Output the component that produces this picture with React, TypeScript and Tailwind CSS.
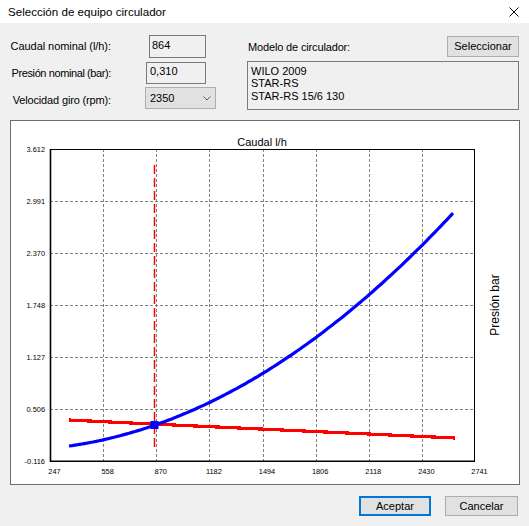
import React from "react";

const font = { fontFamily: '"Liberation Sans", Arial, sans-serif' };

// grid positions in page coordinates (svg viewBox uses the same numbers)
const PLOT = { left: 50, top: 149, right: 475, bottom: 461 };
const xTicks = ["247", "558", "870", "1182", "1494", "1806", "2118", "2430", "2741"];
const yTicks = ["3.612", "2.991", "2.370", "1.748", "1.127", "0.506", "-0.116"];

function curvePoints() {
  const pts: string[] = [];
  for (let x = 69; x <= 455; x += 3) {
    const u = x - 69;
    const y = 446 - 0.139 * u - 0.001217 * u * u;
    pts.push(`${x},${y.toFixed(1)}`);
  }
  return pts.join(" ");
}

function Chart() {
  const stepX = (PLOT.right - PLOT.left) / 8;
  const stepY = (PLOT.bottom - PLOT.top) / 6;
  return (
    <svg width={508} height={363} viewBox="11 121 508 363" className="block">
      {/* grid */}
      {Array.from({ length: 7 }).map((_, i) => {
        const x = Math.round(PLOT.left + stepX * (i + 1)) + 0.5;
        return (
          <line
            key={`vx-${i}`}
            x1={x}
            x2={x}
            y1={PLOT.top}
            y2={PLOT.bottom}
            stroke="#808080"
            strokeWidth={1}
            strokeDasharray="3 2"
          />
        );
      })}
      {Array.from({ length: 5 }).map((_, i) => {
        const y = Math.round(PLOT.top + stepY * (i + 1)) + 0.5;
        return (
          <line
            key={`hy-${i}`}
            x1={PLOT.left}
            x2={PLOT.right}
            y1={y}
            y2={y}
            stroke="#808080"
            strokeWidth={1}
            strokeDasharray="3 2"
          />
        );
      })}

      {/* frame */}
      <rect
        x={PLOT.left + 0.5}
        y={PLOT.top + 0.5}
        width={PLOT.right - PLOT.left - 1}
        height={PLOT.bottom - PLOT.top}
        fill="none"
        stroke="#000"
        strokeWidth={1}
      />
      <line x1={50.5} x2={50.5} y1={149} y2={462} stroke="#000" strokeWidth={1.6} />
      <line x1={50} x2={475} y1={461.2} y2={461.2} stroke="#000" strokeWidth={1.4} />

      {/* y labels */}
      {yTicks.map((t, i) => (
        <text
          key={t}
          x={45}
          y={PLOT.top + stepY * i + 2.6}
          fontSize={7.4}
          textAnchor="end"
          fill="#000"
          style={font}
        >
          {t}
        </text>
      ))}
      {/* x labels */}
      {xTicks.map((t, i) => (
        <text
          key={t}
          x={PLOT.left + stepX * i + 4.5}
          y={474}
          fontSize={7.4}
          textAnchor="middle"
          fill="#000"
          style={font}
        >
          {t}
        </text>
      ))}

      <text x={262} y={146} fontSize={11} textAnchor="middle" fill="#000" style={font}>
        Caudal l/h
      </text>
      <text
        x={499}
        y={305}
        fontSize={12}
        textAnchor="middle"
        fill="#000"
        transform="rotate(-90 499 305)"
        style={font}
      >
        Presión bar
      </text>

      {/* nominal flow marker */}
      <line
        x1={154.5}
        x2={154.5}
        y1={165}
        y2={447}
        stroke="#ff0000"
        strokeWidth={1.5}
        strokeDasharray="9 4"
      />

      {/* network curve */}
      <polyline
        points="69,420 120,422.5 200,426.2 280,429.9 360,433.6 420,436.4 455,438"
        fill="none"
        stroke="#ff0000"
        strokeWidth={3.2}
        shapeRendering="crispEdges"
      />
      {/* pump curve */}
      <polyline
        points={curvePoints()}
        fill="none"
        stroke="#0000ff"
        strokeWidth={3.2}
      />
      <rect x={150.5} y={421} width={8} height={8} fill="#0000ff" />
    </svg>
  );
}

export default function App() {
  return (
    <div className="w-[529px] h-[526px] bg-[#f0f0f0] text-black overflow-hidden" style={font}>
      {/* title bar */}
      <div className="h-[23px] bg-white flex items-center justify-between pl-[8px] pr-[10px]">
        <span className="text-[11.6px]">Selección de equipo circulador</span>
        <svg width="10" height="10" viewBox="0 0 10 10">
          <path d="M0.5 0.5 L9.5 9.5 M9.5 0.5 L0.5 9.5" stroke="#000" strokeWidth="1" />
        </svg>
      </div>

      {/* form */}
      <div className="h-[97px] flex text-[11px]">
        <div className="w-[247px] flex flex-col pt-[12px]">
          <div className="flex items-center h-[23px]">
            <span className="w-[111px] text-right tracking-[-0.05px]">Caudal nominal (l/h):</span>
            <div className="ml-[38px] w-[57px] h-[23px] border border-[#7a7a7a] pl-[2px] pt-[2px] leading-[14px]">
              864
            </div>
          </div>
          <div className="flex items-center h-[22px] mt-[4px]">
            <span className="w-[111px] text-right tracking-[-0.4px]">Presión nominal (bar):</span>
            <div className="ml-[35px] w-[60px] h-[22px] border border-[#7a7a7a] pl-[3px] pt-[1px] leading-[14px]">
              0,310
            </div>
          </div>
          <div className="flex items-center h-[22px] mt-[3px]">
            <span className="w-[111px] text-right pt-[4px] tracking-[-0.15px]">Velocidad giro (rpm):</span>
            <div className="ml-[34px] w-[71px] h-[22px] border border-[#adadad] bg-[#e1e1e1] flex items-center justify-between pl-[4px] pr-[4px]">
              <span>2350</span>
              <svg width="8" height="5" viewBox="0 0 8 5">
                <path d="M0.5 0.5 L4 4 L7.5 0.5" stroke="#606060" fill="none" strokeWidth="1" />
              </svg>
            </div>
          </div>
        </div>
        <div className="w-[272px] flex flex-col pt-[13px]">
          <div className="flex items-center justify-between h-[21px]">
            <span className="ml-[1px] pt-[2px] tracking-[-0.15px]">Modelo de circulador:</span>
            <button className="w-[72px] h-[21px] bg-[#e1e1e1] border border-[#adadad] flex items-center justify-center">
              Seleccionar
            </button>
          </div>
          <div className="mt-[4px] h-[49px] border border-[#7a7a7a] pl-[3px] pt-[3px] leading-[12.4px]">
            <div>WILO 2009</div>
            <div>STAR-RS</div>
            <div>STAR-RS 15/6 130</div>
          </div>
        </div>
      </div>

      {/* chart panel */}
      <div className="ml-[10px] w-[510px] h-[365px] border border-[#6d6d6d] bg-white">
        <Chart />
      </div>

      {/* buttons */}
      <div className="flex justify-end gap-[14px] pr-[11px] mt-[11px] text-[11px]">
        <button className="w-[72px] h-[20px] bg-[#e1e1e1] border-2 border-[#0078d7] flex items-center justify-center">
          Aceptar
        </button>
        <button className="w-[73px] h-[20px] bg-[#e1e1e1] border border-[#adadad] flex items-center justify-center">
          Cancelar
        </button>
      </div>
    </div>
  );
}
